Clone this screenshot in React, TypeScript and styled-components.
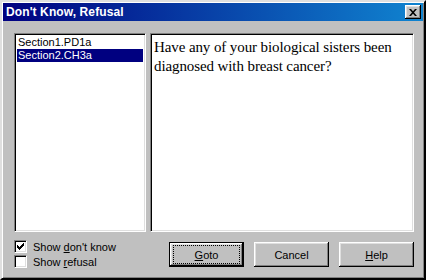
import styled, { createGlobalStyle } from "styled-components";

const GlobalStyle = createGlobalStyle`
  html, body {
    margin: 0;
    padding: 0;
    background: #c0c0c0;
  }
  * {
    box-sizing: border-box;
  }
`;

const Dialog = styled.div`
  width: 426px;
  height: 280px;
  display: flex;
  flex-direction: column;
  padding: 1px;
  background: #c0c0c0;
  border: 2px solid;
  border-color: #dfdfdf #000 #000 #dfdfdf;
  box-shadow: inset 1px 1px 0 #fff, inset -1px -1px 0 #808080;
  font-family: "Liberation Sans", Arial, sans-serif;
  font-size: 11px;
  color: #000;
`;

const TitleBar = styled.div`
  height: 18px;
  display: flex;
  align-items: center;
  justify-content: space-between;
  padding: 0 2px 0 3px;
  background: linear-gradient(90deg, #000080, #1084d0);
  color: #fff;
`;

const Title = styled.span`
  font-weight: bold;
  font-size: 12px;
  letter-spacing: 0.1px;
`;

const CloseButton = styled.div`
  width: 16px;
  height: 14px;
  display: flex;
  align-items: center;
  justify-content: center;
  background: #c0c0c0;
  box-shadow: inset -1px -1px 0 #000, inset 1px 1px 0 #fff,
    inset -2px -2px 0 #808080, inset 2px 2px 0 #dfdfdf;
`;

const Body = styled.div`
  flex: 1;
  display: flex;
  flex-direction: column;
  padding: 12px 9px 0 11px;
`;

const TopRow = styled.div`
  display: flex;
  gap: 4px;
  height: 199px;
`;

const Sunken = styled.div`
  background: #fff;
  border: 1px solid;
  border-color: #808080 #fff #fff #808080;
  box-shadow: inset 1px 1px 0 #000, inset -1px -1px 0 #dfdfdf;
  padding: 2px;
`;

const ListBox = styled(Sunken)`
  width: 132px;
`;

const ListItem = styled.div<{ $selected?: boolean }>`
  height: 13px;
  line-height: 13px;
  padding-left: 1px;
  font-size: 11px;
  background: ${({ $selected }) => ($selected ? "#000080" : "transparent")};
  color: ${({ $selected }) => ($selected ? "#fff" : "#000")};
`;

const QuestionBox = styled(Sunken)`
  flex: 1;
  padding: 4px 3px;
  font-family: "Liberation Serif", "Times New Roman", serif;
  font-size: 15px;
  letter-spacing: -0.1px;
  line-height: 19px;
`;

const BottomRow = styled.div`
  display: flex;
  padding-top: 8px;
`;

const Checks = styled.div`
  width: 155px;
  display: flex;
  flex-direction: column;
  gap: 2px;
`;

const CheckRow = styled.label`
  display: flex;
  align-items: center;
  gap: 6px;
  height: 13px;
  font-size: 11px;
`;

const Box = styled.span`
  width: 13px;
  height: 13px;
  display: flex;
  align-items: center;
  justify-content: center;
  background: #fff;
  border: 1px solid;
  border-color: #808080 #fff #fff #808080;
  box-shadow: inset 1px 1px 0 #000, inset -1px -1px 0 #dfdfdf;
`;

const Buttons = styled.div`
  display: flex;
  gap: 10px;
  padding-top: 2px;
`;

const Button = styled.div<{ $default?: boolean }>`
  width: 75px;
  height: 25px;
  display: flex;
  align-items: center;
  justify-content: center;
  font-size: 11px;
  background: #c0c0c0;
  border: ${({ $default }) => ($default ? "1px solid #000" : "none")};
  box-shadow: inset -1px -1px 0 #000, inset 1px 1px 0 #fff,
    inset -2px -2px 0 #808080, inset 2px 2px 0 #dfdfdf;
`;

const Focus = styled.span`
  display: flex;
  align-items: center;
  justify-content: center;
  width: 65px;
  height: 17px;
  outline: 1px dotted #000;
`;

const Key = styled.span`
  text-decoration: underline;
`;

const Check = () => (
  <svg width="7" height="7" viewBox="0 0 7 7">
    <path d="M0 2h1v1h1v1h1v-1h1v-1h1v-1h1v-1h1v3h-1v1h-1v1h-1v1h-1v1h-1v-1h-1v-1h-1z" fill="#000" />
  </svg>
);

const CloseX = () => (
  <svg width="8" height="7" viewBox="0 0 8 7">
    <path d="M0 0h2l2 2.2L6 0h2L5 3.5 8 7H6L4 4.8 2 7H0l3-3.5z" fill="#000" />
  </svg>
);

export default function App() {
  return (
    <>
      <GlobalStyle />
      <Dialog>
        <TitleBar>
          <Title>Don't Know, Refusal</Title>
          <CloseButton>
            <CloseX />
          </CloseButton>
        </TitleBar>
        <Body>
          <TopRow>
            <ListBox>
              <ListItem>Section1.PD1a</ListItem>
              <ListItem $selected>Section2.CH3a</ListItem>
            </ListBox>
            <QuestionBox>
              Have any of your biological sisters been diagnosed with breast
              cancer?
            </QuestionBox>
          </TopRow>
          <BottomRow>
            <Checks>
              <CheckRow>
                <Box>
                  <Check />
                </Box>
                <span>
                  Show <Key>d</Key>on't know
                </span>
              </CheckRow>
              <CheckRow>
                <Box />
                <span>
                  Show <Key>r</Key>efusal
                </span>
              </CheckRow>
            </Checks>
            <Buttons>
              <Button $default>
                <Focus>
                  <Key>G</Key>oto
                </Focus>
              </Button>
              <Button>Cancel</Button>
              <Button>
                <span>
                  <Key>H</Key>elp
                </span>
              </Button>
            </Buttons>
          </BottomRow>
        </Body>
      </Dialog>
    </>
  );
}
